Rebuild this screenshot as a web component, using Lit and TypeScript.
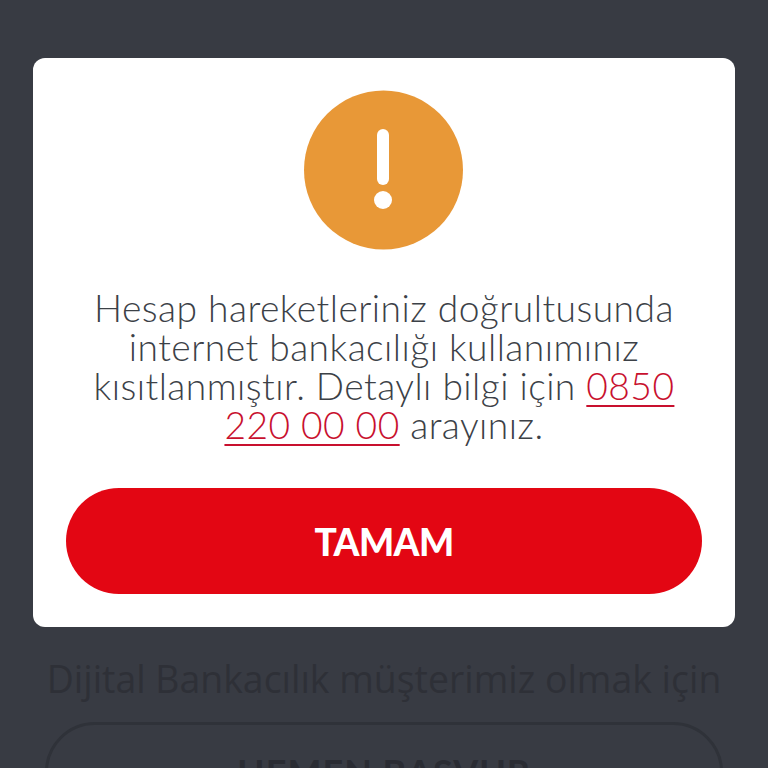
import { LitElement, html, css } from 'lit';
import { customElement } from 'lit/decorators.js';

@customElement('app-root')
export class AppRoot extends LitElement {
  static styles = css`
    :host {
      display: block;
      position: relative;
      width: 768px;
      height: 768px;
      overflow: hidden;
      background: #383b43;
      font-family: Lato, "Open Sans", sans-serif;
    }

    /* dimmed page behind the dialog */
    .behind {
      display: flex;
      flex-direction: column;
      align-items: center;
      padding: 657px 45px 0;
    }

    .behind p {
      margin: 0;
      font-family: "Open Sans", sans-serif;
      font-size: 37.4px;
      line-height: 44px;
      color: #2e3037;
      white-space: nowrap;
    }

    .apply {
      flex: none;
      box-sizing: border-box;
      width: 678px;
      height: 110px;
      margin-top: 21px;
      padding-top: 25px;
      border: 3px solid #2f3239;
      border-radius: 50px;
      text-align: center;
      font-size: 36px;
      font-weight: 700;
      letter-spacing: 1px;
      color: #2a2c33;
    }

    .modal {
      position: absolute;
      top: 58px;
      left: 33px;
      box-sizing: border-box;
      width: 702px;
      height: 569px;
      padding: 32px 33px 33px;
      display: flex;
      flex-direction: column;
      align-items: center;
      background: #fff;
      border-radius: 12px;
    }

    .icon {
      display: block;
      width: 160px;
      height: 160px;
      flex: none;
    }

    .message {
      margin: 38px 0 0;
      width: 100%;
      text-align: center;
      font-size: 37.2px;
      line-height: 39px;
      font-weight: 300;
      letter-spacing: 0.45px;
      color: #3c4147;
      white-space: nowrap;
    }

    .message a {
      color: #c8102e;
      text-decoration: underline;
      text-decoration-thickness: 2px;
      text-underline-offset: 5px;
    }

    .ok {
      margin-top: auto;
      width: 100%;
      height: 106px;
      flex: none;
      border: none;
      border-radius: 53px;
      background: #e30613;
      color: #fff;
      font-family: inherit;
      font-size: 37px;
      font-weight: 900;
      letter-spacing: -0.6px;
    }
  `;

  render() {
    return html`
      <div class="behind">
        <p>Dijital Bankacılık müşterimiz olmak için</p>
        <div class="apply">HEMEN BAŞVUR</div>
      </div>
      <div class="modal">
        <svg class="icon" viewBox="0 0 160 160" aria-hidden="true">
          <circle cx="79.5" cy="80" r="79.5" fill="#e89837"></circle>
          <rect x="73" y="39" width="12" height="56" rx="6" fill="#fff"></rect>
          <circle cx="79" cy="110" r="9" fill="#fff"></circle>
        </svg>
        <p class="message">
          Hesap hareketleriniz doğrultusunda<br />
          internet bankacılığı kullanımınız<br />
          kısıtlanmıştır. Detaylı bilgi için <a>0850<br />220 00 00</a> arayınız.
        </p>
        <button class="ok">TAMAM</button>
      </div>
    `;
  }
}
